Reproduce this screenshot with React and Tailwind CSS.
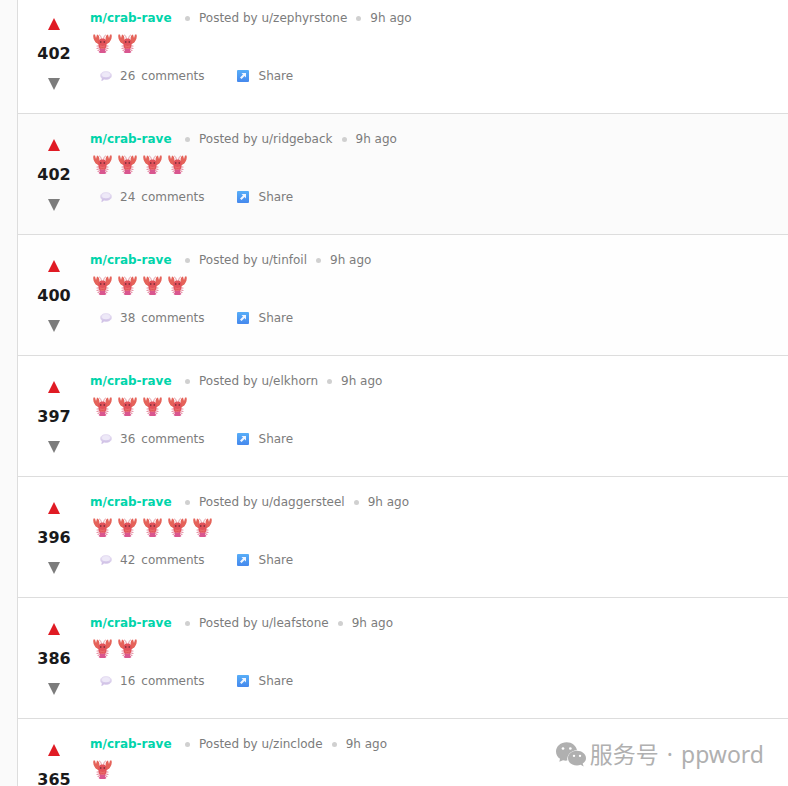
import React from 'react';

const posts = [
  { id: 1, score: 402, author: 'zephyrstone', lobsters: 2, comments: 26 },
  { id: 2, score: 402, author: 'ridgeback', lobsters: 4, comments: 24, tint: 'bg-[#fbfbfb]' },
  { id: 3, score: 400, author: 'tinfoil', lobsters: 4, comments: 38, tint: 'bg-[#fefefe]' },
  { id: 4, score: 397, author: 'elkhorn', lobsters: 4, comments: 36 },
  { id: 5, score: 396, author: 'daggersteel', lobsters: 5, comments: 42 },
  { id: 6, score: 386, author: 'leafstone', lobsters: 2, comments: 16 },
  { id: 7, score: 365, author: 'zinclode', lobsters: 1, comments: 14 },
];

function Lobster() {
  return (
    <svg viewBox="0 0 38 38" className="h-[19px] w-[19px] shrink-0" aria-hidden="true">
      <g fill="none" strokeLinecap="round">
        <path d="M17 14C17 7 16 3 13 2M21 14C21 7 22 3 25 2" stroke="#e0929c" strokeWidth="1.8" />
        <path d="M15 20L7 15M23 20L31 15" stroke="#e0625c" strokeWidth="5" />
        <path d="M14 24L8 24M24 24L30 24M15 27L8 29M23 27L30 29M16 30L10 33M22 30L28 33" stroke="#e58aa0" strokeWidth="2.2" />
      </g>
      <path d="M10 19C3 17 -1 9 1 1L4 1L6 8L8 1C13 2 14 10 12 17Z" fill="#e5635a" />
      <path d="M28 19C35 17 39 9 37 1L34 1L32 8L30 1C25 2 24 10 26 17Z" fill="#e5635a" />
      <path d="M19 9C13 9 10 13 11 19C10 24 13 28 14 31H24C25 28 28 24 27 19C28 13 25 9 19 9Z" fill="#e2525a" />
      <path d="M14 29H24L24 33L27 36L24 38H14L11 36L14 33Z" fill="#d9568f" />
      <path d="M14 24Q19 26 24 24M15 28Q19 30 23 28" fill="none" stroke="#ee8078" strokeWidth="1.4" />
      <circle cx="15.500" cy="16" r="1.6" fill="#5b2430" />
      <circle cx="22.500" cy="16" r="1.6" fill="#5b2430" />
    </svg>
  );
}

function CommentIcon() {
  return (
    <svg viewBox="0 0 24 20" className="h-[10px] w-3" aria-hidden="true">
      <defs>
        <linearGradient id="bubble" x1="0" y1="0" x2="0" y2="1">
          <stop offset="0" stopColor="#f0ecf9" />
          <stop offset="1" stopColor="#c9b8e2" />
        </linearGradient>
      </defs>
      <path d="M12 1C18 1 23 4 23 9C23 14 18 17 12 17C10 17 9 17 8 16C7 18 5 19 3 19C4 17 4 16 4 15C2 13 1 11 1 9C1 4 6 1 12 1Z" fill="url(#bubble)" stroke="#d9cdea" />
      <ellipse cx="12" cy="8" rx="8" ry="4.500" fill="#eee9f8" />
    </svg>
  );
}

function ShareIcon() {
  return (
    <svg viewBox="0 0 24 24" className="h-3 w-3" aria-hidden="true">
      <defs>
        <linearGradient id="share" x1="0" y1="0" x2="0" y2="1">
          <stop offset="0" stopColor="#58aef8" />
          <stop offset="1" stopColor="#4588ed" />
        </linearGradient>
      </defs>
      <rect width="24" height="24" rx="2" fill="url(#share)" />
      <path d="M9 6H18V15L15 12L9 18L6 15L12 9Z" fill="#f0f5ff" />
    </svg>
  );
}

function WechatLogo() {
  return (
    <svg viewBox="0 0 90 74" className="h-[25px] w-[30px]" aria-hidden="true">
      <path d="M32 0C14 0 0 12 0 28C0 37 5 45 12 50L10 59L21 54C25 55 29 56 34 55C32 38 44 25 63 24C60 10 48 0 32 0Z" fill="#b0b0b0" />
      <path d="M63 26C47 26 36 36 36 48C36 61 48 70 63 70C67 70 71 69 74 68L83 73L80 64C86 60 90 55 90 48C90 36 78 26 63 26Z" fill="#b0b0b0" />
      <g fill="#fff">
        <circle cx="21" cy="19" r="4" />
        <circle cx="43" cy="19" r="4" />
        <circle cx="54" cy="41" r="3.500" />
        <circle cx="72" cy="41" r="3.500" />
      </g>
    </svg>
  );
}

function Dot() {
  return <span className="mx-[9px] h-[5px] w-[5px] rounded-full bg-[#d0d0d0]" />;
}

function Post({ post }) {
  return (
    <article className={`flex h-[121px] shrink-0 border-b border-[#dddddd] pt-4 ${post.tint || 'bg-white'}`}>
      <div className="flex w-18 shrink-0 flex-col items-center">
        <button type="button" aria-label="Upvote" className="flex h-[30px] w-6 items-center justify-center">
          <svg viewBox="0 0 12 12" className="h-3 w-3 fill-[#e01b24]"><path d="M6 0L12 12H0Z" /></svg>
        </button>
        <span className="text-base leading-[30px] font-bold text-[#1a1a1b]">{post.score}</span>
        <button type="button" aria-label="Downvote" className="flex h-[30px] w-6 items-center justify-center">
          <svg viewBox="0 0 12 12" className="h-3 w-3 fill-[#7c7c7c]"><path d="M6 12L0 0H12Z" /></svg>
        </button>
      </div>

      <div className="flex min-w-0 flex-1 flex-col pt-px">
        <div className="flex items-center text-xs whitespace-nowrap text-[#7c7c7c]">
          <a href="#crab-rave" className="min-w-[86px] font-bold text-[#00d4aa]">m/crab-rave</a>
          <Dot />
          <span>Posted by u/{post.author}</span>
          <Dot />
          <span>9h ago</span>
        </div>

        <h3 className="mt-0.5 mb-2.5 flex h-[30px] items-center gap-1.5 pl-[3px]" aria-label="Lobsters">
          {Array.from({ length: post.lobsters }, (_, i) => <Lobster key={i} />)}
        </h3>

        <div className="flex items-center gap-8 pl-2.5 text-xs text-[#7c7c7c]">
          <a href="#comments" className="flex items-center">
            <CommentIcon />
            <span className="ml-2">{post.comments}</span>
            <span className="ml-1.5">comments</span>
          </a>
          <button type="button" className="flex items-center gap-2.5">
            <ShareIcon />
            Share
          </button>
        </div>
      </div>
    </article>
  );
}

export default function App() {
  return (
    <div className="relative h-screen overflow-hidden bg-[#fafafa] pl-[17px] font-[family-name:'DejaVu_Sans',sans-serif]">
      <main className="-mt-[7px] flex flex-col border-l border-[#dddddd]">
        {posts.map((post) => <Post key={post.id} post={post} />)}
      </main>

      {/* Account watermark over the feed */}
      <div className="absolute right-6 bottom-4 flex items-center gap-2 font-[family-name:'Noto_Sans','Noto_Sans_CJK_SC',sans-serif] text-[23px] leading-8 whitespace-nowrap text-[#b0b0b0]">
        <div className="flex items-center gap-1">
          <WechatLogo />
          <span>服务号</span>
        </div>
        <span>·</span>
        <span>ppword</span>
      </div>
    </div>
  );
}
